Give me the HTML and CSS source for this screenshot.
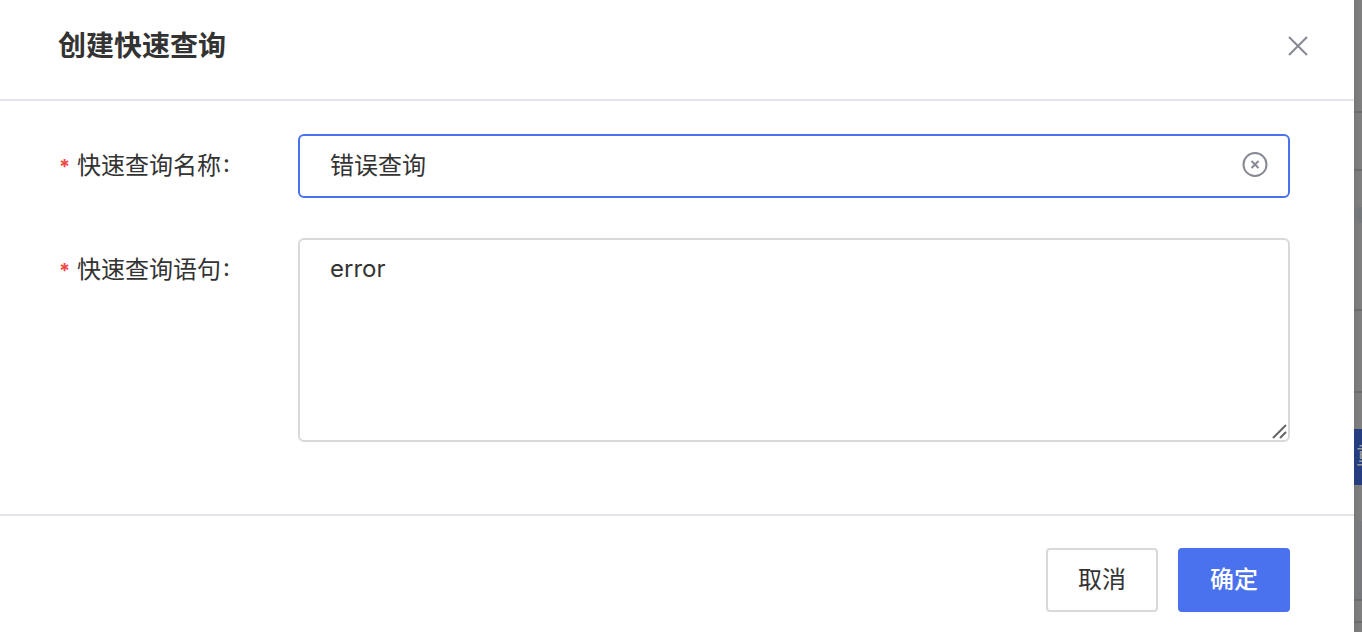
FILE: index.html
```
<!DOCTYPE html>
<html lang="zh-CN">
<head>
<meta charset="utf-8">
<meta name="viewport" content="width=device-width, initial-scale=1">
<title>创建快速查询</title>
<link rel="stylesheet" href="styles.css">
</head>
<body>
<div class="screen">
  <form class="dialog" role="dialog" aria-labelledby="dialog-title">
    <header class="dialog-header">
      <h1 class="dialog-title" id="dialog-title">创建快速查询</h1>
      <button class="icon-button" type="button" aria-label="关闭">
        <svg class="close-icon" viewBox="0 0 20 20"><path d="M1 1 19 19M19 1 1 19"/></svg>
      </button>
    </header>
    <div class="dialog-body">
      <div class="field">
        <label class="label" for="query-name"><span class="required">*</span>快速查询名称<span class="colon">:</span></label>
        <div class="control">
          <input class="text-input" id="query-name" type="text" value="错误查询">
          <button class="icon-button clear-button" type="button" aria-label="清除">
            <svg class="clear-icon" viewBox="0 0 26 26"><circle cx="13" cy="12.5" r="11.5"/><path d="M9.5 9 16.5 16M16.5 9 9.5 16"/></svg>
          </button>
        </div>
      </div>
      <div class="field">
        <label class="label" for="query-text"><span class="required">*</span>快速查询语句<span class="colon">:</span></label>
        <div class="control">
          <textarea class="text-area" id="query-text">error</textarea>
          <svg class="grip" viewBox="0 0 16 16" aria-hidden="true"><path d="M1 14 14 1M8 14 14 8"/></svg>
        </div>
      </div>
    </div>
    <footer class="dialog-footer">
      <button class="button" type="button">取消</button>
      <button class="button primary" type="submit">确定</button>
    </footer>
  </form>
  <div class="backdrop" aria-hidden="true">
    <div class="row row-top"></div>
    <div class="row row-bar"></div>
    <div class="row row-group"><div class="band"></div></div>
    <div class="row row-chart"></div>
    <div class="row row-tools"></div>
    <div class="action">重</div>
    <div class="space"></div>
    <div class="row row-table"></div>
    <div class="row row-bar-small"></div>
    <div class="rest"></div>
  </div>
</div>
</body>
</html>
```
FILE: styles.css
```
* {
  box-sizing: border-box;
}

body {
  margin: 0;
  background: #fff;
  color: #333;
  font: 24px/36px Inter, "Noto Sans CJK SC", sans-serif;
}

button,
input,
textarea {
  font: inherit;
  color: inherit;
}

.screen {
  display: flex;
  min-height: 100vh;
}

.dialog {
  flex: 1;
  display: flex;
  flex-direction: column;
  background: #fff;
}

.dialog-header {
  display: flex;
  justify-content: space-between;
  align-items: center;
  padding: 25px 46px 32px 58px;
  border-bottom: 2px solid #e3e5ec;
}

.dialog-title {
  margin: 0;
  font-size: 28px;
  line-height: 42px;
  font-weight: 700;
}

.icon-button {
  display: flex;
  padding: 0;
  border: 0;
  background: none;
  cursor: pointer;
}

.icon-button svg {
  fill: none;
  stroke: #868993;
  stroke-width: 2;
}

.close-icon {
  width: 20px;
  height: 20px;
}

.dialog-body {
  flex: 1;
  display: flex;
  flex-direction: column;
  gap: 40px;
  padding: 33px 64px 72px 59px;
}

.field {
  display: flex;
}

.label {
  flex: none;
  width: 239px;
  padding-top: 14px;
}

.required {
  display: inline-block;
  width: 18px;
  color: #f04b46;
  font-size: 20px;
  font-weight: 700;
}

.colon {
  margin-left: 2px;
  font-feature-settings: "case";
}

.control {
  position: relative;
  flex: 1;
  display: flex;
}

.text-input,
.text-area {
  width: 100%;
  border: 2px solid #d9d9d9;
  border-radius: 6px;
  background: #fff;
  outline: 0;
}

.text-input {
  height: 64px;
  padding: 0 72px 6px 30px;
  border-color: #4a72ee;
}

.text-area {
  height: 204px;
  padding: 11px 30px;
  resize: none;
}

.clear-button {
  position: absolute;
  top: 18px;
  right: 22px;
}

.clear-icon {
  width: 26px;
  height: 26px;
}

.grip {
  position: absolute;
  right: 2px;
  bottom: 2px;
  width: 16px;
  height: 16px;
  fill: none;
  stroke: #666;
  stroke-width: 2;
}

.dialog-footer {
  display: flex;
  justify-content: flex-end;
  gap: 20px;
  padding: 32px 64px 20px;
  border-top: 2px solid #e3e5ec;
}

.button {
  width: 112px;
  height: 64px;
  padding: 0;
  border: 2px solid #d9d9d9;
  border-radius: 4px;
  background: #fff;
  cursor: pointer;
}

.primary {
  border-color: #4a72ee;
  background: #4a72ee;
  color: #fff;
  font-weight: 500;
}

.backdrop {
  flex: none;
  display: flex;
  flex-direction: column;
  width: 8px;
  overflow: hidden;
  background: linear-gradient(to right, #787878, #808080);
}

.row {
  border-bottom: 2px solid #6c6c6c;
}

.row-top {
  height: 113px;
}

.row-bar {
  height: 58px;
}

.row-group {
  height: 140px;
  padding-top: 36px;
}

.band {
  height: 16px;
  background: #75787b;
}

.row-chart {
  height: 82px;
}

.row-tools {
  height: 36px;
  border: 0;
}

.action {
  height: 56px;
  padding-left: 2px;
  background: #263d80;
  color: #999;
  line-height: 54px;
}

.space {
  height: 36px;
}

.row-table {
  height: 80px;
  background: #77797d;
}

.row-bar-small {
  height: 22px;
}

.rest {
  flex: 1;
}
```
